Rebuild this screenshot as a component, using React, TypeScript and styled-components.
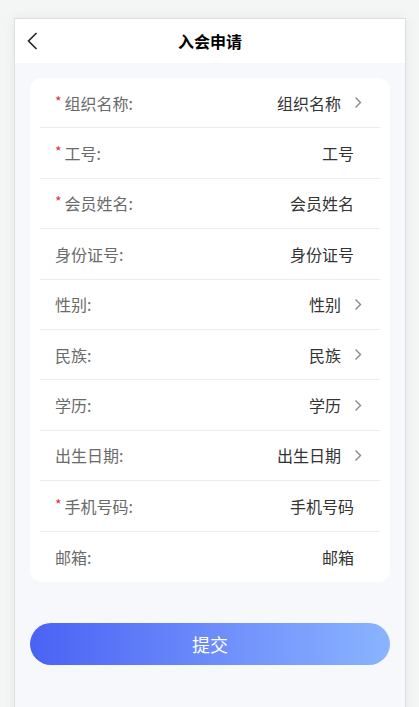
import styled, { createGlobalStyle } from 'styled-components';

const GlobalStyle = createGlobalStyle`
  html, body {
    margin: 0;
    padding: 0;
    background: #f4f5f5;
    font-family: "Noto Sans CJK SC", "Noto Sans", sans-serif;
  }
`;

const Page = styled.div`
  height: 707px;
  overflow: hidden;
  padding-top: 18px;
  box-sizing: border-box;
`;

const Phone = styled.div`
  width: 390px;
  height: 720px;
  margin: 0 0 0 14px;
  background: #f7f8fb;
  border: 1px solid #dedede;
  box-shadow: 0 0 12px rgba(0, 0, 0, 0.06);
  display: flex;
  flex-direction: column;
`;

const Header = styled.div`
  height: 44px;
  background: #fff;
  display: flex;
  align-items: center;
  justify-content: center;
  position: relative;
`;

const BackButton = styled.div`
  position: absolute;
  left: 12px;
  top: 12px;
  width: 14px;
  height: 20px;
  display: flex;
  align-items: center;
`;

const Title = styled.span`
  font-size: 16px;
  font-weight: 700;
  color: #000;
`;

const Content = styled.div`
  padding: 15px 15px 0;
  display: flex;
  flex-direction: column;
`;

const Card = styled.div`
  background: #fff;
  border-radius: 12px;
  display: flex;
  flex-direction: column;
`;

const Row = styled.div<{ $last?: boolean }>`
  box-sizing: border-box;
  height: 50.4px;
  margin: 0 10px;
  padding: 0 18px 0 15px;
  display: flex;
  align-items: center;
  justify-content: space-between;
  border-bottom: ${(p) => (p.$last ? 'none' : '1px solid #ececf0')};
`;

const Label = styled.span`
  font-size: 16px;
  color: #6a6a6a;
  display: flex;
  align-items: center;
`;

const Star = styled.span`
  color: #e8302e;
  font-size: 14px;
  margin-right: 3px;
  position: relative;
  top: -2px;
`;

const ValueWrap = styled.div`
  display: flex;
  align-items: center;
  gap: 13px;
`;

const Value = styled.span<{ $plain?: boolean }>`
  font-size: 16px;
  color: #333;
  margin-right: ${(p) => (p.$plain ? '8px' : '0')};
`;

const SubmitButton = styled.button`
  margin-top: 41px;
  height: 42px;
  border: none;
  border-radius: 21px;
  background: linear-gradient(90deg, #4a62f4 0%, #6f90fb 55%, #8ab4ff 100%);
  color: #fff;
  font-size: 18px;
  font-family: inherit;
`;

const Arrow = () => (
  <svg width="8" height="13" viewBox="0 0 8 13" fill="none">
    <path d="M1.5 1.5 L6.5 6.5 L1.5 11.5" stroke="#888" strokeWidth="1.4" />
  </svg>
);

const fields = [
  { label: '组织名称', required: true, arrow: true },
  { label: '工号', required: true, arrow: false },
  { label: '会员姓名', required: true, arrow: false },
  { label: '身份证号', required: false, arrow: false },
  { label: '性别', required: false, arrow: true },
  { label: '民族', required: false, arrow: true },
  { label: '学历', required: false, arrow: true },
  { label: '出生日期', required: false, arrow: true },
  { label: '手机号码', required: true, arrow: false },
  { label: '邮箱', required: false, arrow: false },
];

export default function App() {
  return (
    <>
      <GlobalStyle />
      <Page>
        <Phone>
          <Header>
            <BackButton>
              <svg width="11" height="18" viewBox="0 0 11 18" fill="none">
                <path d="M9.5 1 L1.5 9 L9.5 17" stroke="#222" strokeWidth="1.6" />
              </svg>
            </BackButton>
            <Title>入会申请</Title>
          </Header>
          <Content>
            <Card>
              {fields.map((f, i) => (
                <Row key={f.label} $last={i === fields.length - 1}>
                  <Label>
                    {f.required && <Star>*</Star>}
                    {f.label}:
                  </Label>
                  <ValueWrap>
                    <Value $plain={!f.arrow}>{f.label}</Value>
                    {f.arrow && <Arrow />}
                  </ValueWrap>
                </Row>
              ))}
            </Card>
            <SubmitButton>提交</SubmitButton>
          </Content>
        </Phone>
      </Page>
    </>
  );
}
